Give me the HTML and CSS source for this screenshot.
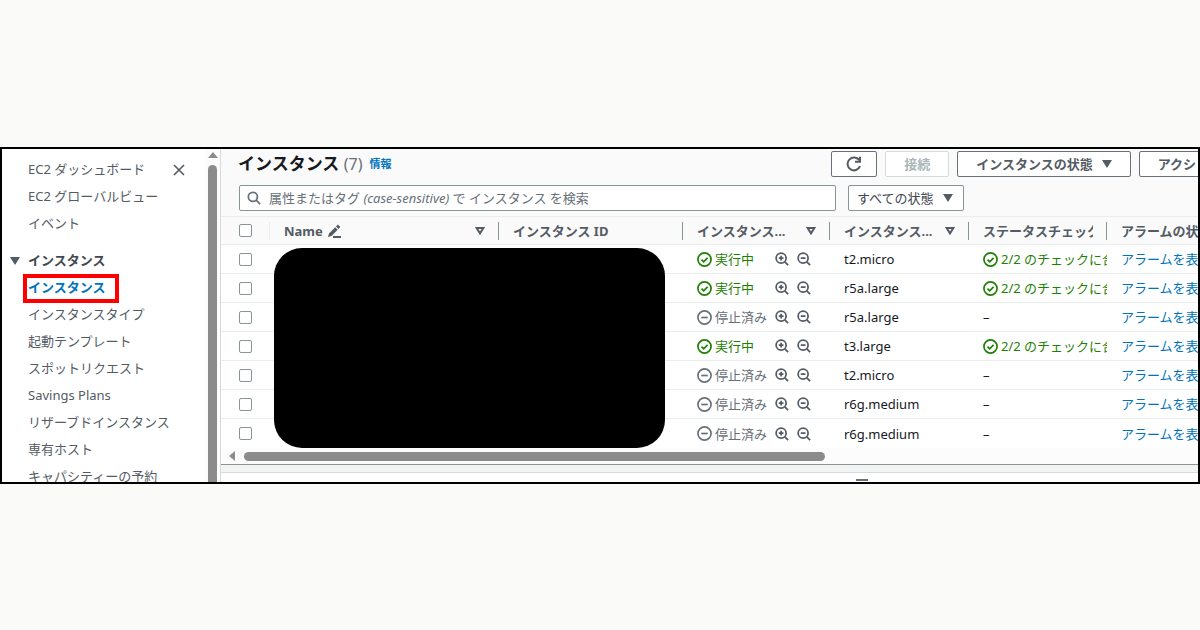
FILE: index.html
```html
<!DOCTYPE html>
<html lang="ja">
<head>
	<meta charset="UTF-8">
	<title>インスタンス | EC2</title>
	<link rel="stylesheet" href="styles.css">
	<script src="main.js" defer></script>
</head>
<body>
	<svg class="sprite" aria-hidden="true">
		<symbol id="ok" viewBox="0 0 16 16"><circle cx="8" cy="8" r="7"/><path d="M4.8 8.2l2.3 2.3 4.2-4.3"/></symbol>
		<symbol id="stop" viewBox="0 0 16 16"><circle cx="8" cy="8" r="7"/><path d="M4.5 8h7"/></symbol>
		<symbol id="zoom-in" viewBox="0 0 16 16"><circle cx="7" cy="7" r="5.7"/><path d="M11.2 11.2L15 15M4.3 7h5.4M7 4.3v5.4"/></symbol>
		<symbol id="zoom-out" viewBox="0 0 16 16"><circle cx="7" cy="7" r="5.7"/><path d="M11.2 11.2L15 15M4.3 7h5.4"/></symbol>
		<symbol id="search" viewBox="0 0 16 16"><circle cx="6.7" cy="6.7" r="5.2"/><path d="M10.5 10.5L15 15"/></symbol>
		<symbol id="down" viewBox="0 0 10 8"><path d="M0 0h10L5 8z"/></symbol>
		<symbol id="sort" viewBox="0 0 10 8"><path d="M1.6 1h6.8L5 6.4z"/></symbol>
	</svg>

	<div class="window">
		<aside class="side">
			<nav class="nav">
				<ul>
					<li><a href="#">EC2 ダッシュボード</a></li>
					<li><a href="#">EC2 グローバルビュー</a></li>
					<li><a href="#">イベント</a></li>
				</ul>
				<h2><svg class="caret"><use href="#down"/></svg>インスタンス</h2>
				<ul>
					<li><a class="current" href="#">インスタンス</a></li>
					<li><a href="#">インスタンスタイプ</a></li>
					<li><a href="#">起動テンプレート</a></li>
					<li><a href="#">スポットリクエスト</a></li>
					<li><a href="#">Savings Plans</a></li>
					<li><a href="#">リザーブドインスタンス</a></li>
					<li><a href="#">専有ホスト</a></li>
					<li><a href="#">キャパシティーの予約</a></li>
				</ul>
			</nav>
			<button class="close" type="button" aria-label="閉じる"><svg viewBox="0 0 12 12"><path d="M1 1l10 10M11 1L1 11"/></svg></button>
			<div class="vscroll"><i class="up"></i><i class="thumb"></i></div>
		</aside>

		<main class="main">
			<header class="head">
				<h1>インスタンス <span>(7)</span></h1>
				<a class="info" href="#">情報</a>
				<div class="actions">
					<button class="btn refresh" type="button" aria-label="更新"><svg viewBox="0 0 16 16"><path d="M14 10.2A6.4 6.4 0 1 1 13.2 4.2"/><path d="M14 .8v5H9"/></svg></button>
					<button class="btn" type="button" disabled>接続</button>
					<button class="btn" type="button">インスタンスの状態<svg class="caret"><use href="#down"/></svg></button>
					<button class="btn" type="button">アクション<svg class="caret"><use href="#down"/></svg></button>
				</div>
			</header>
			<div class="filters">
				<div class="search">
					<svg><use href="#search"/></svg>
					<label for="q">属性またはタグ <em>(case-sensitive)</em> で インスタンス を検索</label>
					<input id="q" type="text">
				</div>
				<div class="state">
					<select aria-label="状態"><option>すべての状態</option></select>
					<svg class="caret"><use href="#down"/></svg>
				</div>
			</div>

			<div class="list">
				<table>
					<colgroup>
						<col class="c-check"><col class="c-name"><col class="c-id"><col class="c-state"><col class="c-type"><col class="c-status"><col>
					</colgroup>
					<thead>
						<tr>
							<th><input type="checkbox" aria-label="すべて選択"></th>
							<th><div>Name<svg class="pen" viewBox="0 0 14 14"><path d="M6 13h8" class="base"/><path d="M1 13l1-3.6 6.2-6.2 2.5 2.5-6.2 6.2zM9 2.4L10.8.6l2.5 2.5-1.8 1.8z"/></svg><svg class="sort"><use href="#sort"/></svg></div></th>
							<th><div>インスタンス ID</div></th>
							<th><div>インスタンス...<svg class="sort"><use href="#sort"/></svg></div></th>
							<th><div>インスタンス...<svg class="sort"><use href="#sort"/></svg></div></th>
							<th><div class="cut">ステータスチェック</div></th>
							<th><div>アラームの状態</div></th>
						</tr>
					</thead>
					<tbody id="rows"></tbody>
				</table>
				<div class="mask"></div>
			</div>
			<div class="hscroll"><i class="left"></i><i class="thumb"></i></div>
			<div class="split"></div>
			<div class="panel"><i></i></div>
		</main>
	</div>
</body>
</html>
```

FILE: styles.css
```css
*{
	margin:0;
	padding:0;
	box-sizing: border-box;
}
body{
	background: #fafaf8;
	color:#16191f;
	font:13px/20px "Noto Sans","Noto Sans CJK JP",sans-serif;
}
ul{
	list-style: none;
}
a{
	color:#0073bb;
	text-decoration: none;
}
button,input,select{
	font:inherit;
	color:inherit;
}
svg{
	flex:none;
	fill:none;
	stroke:currentColor;
	stroke-width: 2;
}
.sprite{
	display: block;
	width: 0;
	height: 0;
}
.caret{
	width: 10px;
	height: 8px;
	fill:#545b64;
	stroke:none;
}
.window{
	display: flex;
	margin-top: 147px;
	border:2px solid #000;
	background: #fff;
	overflow: hidden;
}

.side{
	display: flex;
	flex:0 0 219px;
	height: 0;
	min-height: 100%;
	min-height: 333px;
	border-right: 1px solid #d5dbdb;
	overflow: hidden;
}
.nav{
	flex:1;
	padding:7px 0 0 26px;
	line-height: 27px;
	white-space: nowrap;
}
.nav a{
	color:#545b64;
}
.nav h2{
	display: flex;
	align-items: center;
	gap:8px;
	margin:10px 0 0 -18px;
	color:#414750;
	font-size: 13px;
}
.nav .current{
	display: block;
	position: relative;
	width: fit-content;
	color:#0073bb;
	font-weight: bold;
}
.current::after{
	content:"";
	position: absolute;
	inset:0 -14px -2px -5px;
	border:4px solid #f00;
}
.close{
	align-self: flex-start;
	width: 12px;
	height: 12px;
	margin:15px 20px 0 0;
	border:0;
	background: none;
	color:#545b64;
}
.close svg{
	display: block;
	stroke-width: 1.6;
}
.vscroll{
	display: flex;
	flex-direction: column;
	align-items: center;
	gap:7px;
	width: 15px;
	padding-top: 3px;
	background: #fcfcfc;
}
.up{
	border:5px solid transparent;
	border-top: 0;
	border-bottom: 6px solid #8b8b8b;
}
.vscroll .thumb{
	flex:1;
	width: 9px;
	border-radius: 5px 5px 0 0;
	background: #8b8b8b;
}

.main{
	flex:1;
	min-width: 0;
	background: #fafafa;
	overflow: hidden;
}
.head{
	display: flex;
	align-items: center;
	margin-right: -62px;
	padding:2px 0 0 17px;
	white-space: nowrap;
}
h1{
	font-size: 17px;
}
h1 span{
	color:#687078;
	font-size: 16px;
	font-weight: normal;
}
.info{
	margin-left: 7px;
	font-size: 11px;
	font-weight: bold;
}
.actions{
	display: flex;
	gap:8px;
	margin-left: auto;
}
.btn{
	display: flex;
	align-items: center;
	gap:9px;
	height: 26px;
	padding:0 18px;
	border:1px solid #687078;
	border-radius: 2px;
	background: #fff;
	color:#545b64;
	font-weight: bold;
}
.btn:disabled{
	border-color:#d5dbdb;
	color:#aab7b8;
}
.refresh{
	padding:0 14px;
}
.refresh svg{
	width: 16px;
	height: 16px;
}
.filters{
	display: flex;
	gap:12px;
	padding:8px 234px 5px 18px;
}
.search{
	display: flex;
	flex:1;
	align-items: center;
	gap:8px;
	height: 26px;
	padding-left: 7px;
	border:1px solid #879596;
	border-radius: 2px;
	background: #fff;
	color:#687078;
	white-space: nowrap;
}
.search svg{
	width: 14px;
	height: 14px;
}
.search input{
	flex:1;
	min-width: 0;
	border:0;
	outline:0;
	background: none;
}
.state{
	position: relative;
	width: 116px;
}
.state select{
	width: 100%;
	height: 26px;
	padding-left: 8px;
	border:1px solid #879596;
	border-radius: 2px;
	background: #fff;
	color:#414750;
	appearance: none;
}
.state .caret{
	position: absolute;
	top:9px;
	right:11px;
	pointer-events: none;
}

/* instance list */
.list{
	position: relative;
}
table{
	width: 100%;
	table-layout: fixed;
	border-spacing: 0;
	white-space: nowrap;
}
.c-check{ width: 49px; }
.c-name{ width: 229px; }
.c-id{ width: 184px; }
.c-state{ width: 147px; }
.c-type{ width: 139px; }
.c-status{ width: 138px; }
th,td{
	height: 29px;
	padding-left: 14px;
	border-bottom: 1px solid #eaeded;
	text-align: left;
	overflow: hidden;
}
th{
	position: relative;
	border-top: 1px solid #eaeded;
	color:#545b64;
}
th:first-child,td:first-child{
	padding-left: 18px;
}
th::after{
	content:"";
	position: absolute;
	top:5px;
	right:0;
	width: 1px;
	height: 18px;
	background: #879596;
}
th:first-child::after{
	background: #eaeded;
}
th:last-child::after{
	display: none;
}
th div{
	display: flex;
	align-items: center;
	padding-right: 14px;
}
th .cut{
	margin-right: 14px;
	padding-right: 0;
	overflow: hidden;
}
.pen{
	width: 14px;
	height: 14px;
	margin-left: 4px;
	fill:currentColor;
	stroke:none;
}
.pen .base{
	stroke:currentColor;
}
.sort{
	width: 10px;
	height: 8px;
	margin-left: auto;
}
tbody tr{
	background: #fff;
}
tbody tr:last-child td{
	border-bottom: 0;
}
input[type=checkbox]{
	display: block;
	width: 13px;
	height: 13px;
	border:1px solid #879596;
	border-radius: 2px;
	background: #fff;
	appearance: none;
}
.cell{
	display: flex;
	align-items: center;
	gap:8px;
}
.status{
	display: flex;
	align-items: center;
	gap:3px;
	color:#687078;
	overflow: hidden;
}
.cell .status{
	flex:0 0 70px;
}
.status svg{
	width: 15px;
	height: 15px;
	stroke-width: 1.8;
}
.running{
	color:#1d8102;
}
.zoom{
	width: 14px;
	height: 14px;
	border:0;
	background: none;
	color:#545b64;
}
.zoom svg{
	display: block;
	width: 14px;
	height: 14px;
}
.mask{
	position: absolute;
	top:32px;
	left:53px;
	width: 391px;
	height: 200px;
	border-radius: 28px;
	background: #000;
}

.hscroll{
	display: flex;
	align-items: center;
	gap:9px;
	height: 16px;
	padding-left: 8px;
	background: #fcfcfc;
}
.left{
	border:5px solid transparent;
	border-left: 0;
	border-right: 6px solid #8b8b8b;
}
.hscroll .thumb{
	width: 60%;
	height: 9px;
	border-radius: 5px;
	background: #8b8b8b;
}
.split{
	height: 9px;
	border:1px solid #d5dbdb;
	border-width: 1px 0;
	border-top-color:#879596;
	background: #f2f3f3;
}
.panel{
	height: 9px;
	padding:6px 0 0 65%;
	background: #fff;
}
.panel i{
	display: block;
	width: 12px;
	height: 2px;
	background: #687078;
}
```

FILE: main.js
```js
var aData=[
	['t2.micro',true],
	['r5a.large',true],
	['r5a.large',false],
	['t3.large',true],
	['t2.micro',false],
	['r6g.medium',false],
	['r6g.medium',false]
];

function icon(id){
	return '<svg><use href="#'+id+'"/></svg>';
}

var sHtml='';
for(var i=0;i<aData.length;i++){
	var bRun=aData[i][1];
	sHtml+='<tr>'+
		'<td><input type="checkbox" aria-label="'+aData[i][0]+' を選択"></td>'+
		'<td></td><td></td>'+
		'<td><div class="cell">'+
			(bRun?'<span class="status running">'+icon('ok')+'実行中</span>':'<span class="status">'+icon('stop')+'停止済み</span>')+
			'<button class="zoom" type="button" aria-label="フィルターに追加">'+icon('zoom-in')+'</button>'+
			'<button class="zoom" type="button" aria-label="フィルターから除外">'+icon('zoom-out')+'</button>'+
		'</div></td>'+
		'<td>'+aData[i][0]+'</td>'+
		'<td>'+(bRun?'<span class="status running">'+icon('ok')+'2/2 のチェックに合格しました</span>':'–')+'</td>'+
		'<td><a href="#">アラームを表示</a></td>'+
	'</tr>';
}
document.getElementById('rows').innerHTML=sHtml;
```
